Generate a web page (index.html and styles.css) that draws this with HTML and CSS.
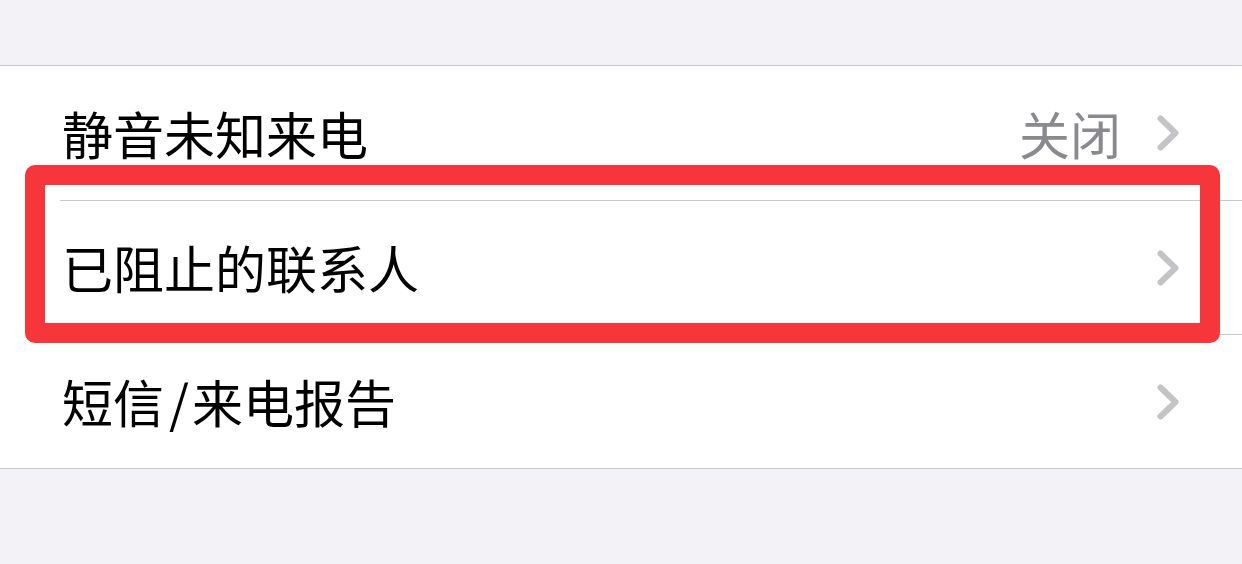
FILE: index.html
```html
<!DOCTYPE html>
<html lang="zh-CN">
<head>
    <meta charset="UTF-8">
    <meta name="viewport" content="width=device-width, initial-scale=1.0">
    <title>电话设置</title>
    <link rel="stylesheet" href="styles.css">
</head>
<body>
    <div class="list">
        <div class="row">
            <div class="row-inner">
                <span class="label">静音未知来电</span>
                <span class="value">关闭</span>
                <svg class="chevron" viewBox="0 0 22 36" width="22" height="36"><polyline points="3.5,3.5 18.5,18 3.5,32.5"/></svg>
            </div>
        </div>
        <div class="row">
            <div class="row-inner">
                <span class="label">已阻止的联系人</span>
                <svg class="chevron" viewBox="0 0 22 36" width="22" height="36"><polyline points="3.5,3.5 18.5,18 3.5,32.5"/></svg>
            </div>
        </div>
        <div class="row">
            <div class="row-inner">
                <span class="label">短信<span class="slash">/</span>来电报告</span>
                <svg class="chevron" viewBox="0 0 22 36" width="22" height="36"><polyline points="3.5,3.5 18.5,18 3.5,32.5"/></svg>
            </div>
        </div>

        <!-- 红框标注 -->
        <div class="marker"></div>
    </div>
</body>
</html>
```

FILE: styles.css
```css
html {
    box-sizing: border-box;
}
*, *:before, *:after {
    box-sizing: inherit;
}
body {
    margin: 0;
    padding-top: 65px;
    background-color: #f2f2f7;
    font-family: "Noto Sans CJK SC", "Noto Sans", sans-serif;
    color: #000;
}

.list {
    position: relative;
    background-color: #fff;
    border-top: 1px solid #c8c7cc;
    border-bottom: 1px solid #c8c7cc;
}

.row {
    padding-left: 60px;
}

.row-inner {
    height: 134px;
    display: flex;
    align-items: center;
    padding-left: 2px;
    padding-right: 63px;
}

.row + .row .row-inner {
    border-top: 1px solid #c8c7cc;
}

.label {
    flex: 1;
    font-size: 51px;
    line-height: 1;
}

.slash {
    margin: 0 3px 0 5px;
}

.value {
    font-size: 51px;
    line-height: 1;
    color: #8a8a8e;
    margin-right: 36px;
}

.chevron {
    display: block;
    fill: none;
    stroke: #c4c4c7;
    stroke-width: 6;
    stroke-linecap: round;
    stroke-linejoin: round;
}

/* 标注框 */
.marker {
    position: absolute;
    left: 25px;
    right: 22px;
    top: 99px;
    height: 178px;
    border: 20px solid #f6363a;
    border-radius: 10px;
    pointer-events: none;
}
```
